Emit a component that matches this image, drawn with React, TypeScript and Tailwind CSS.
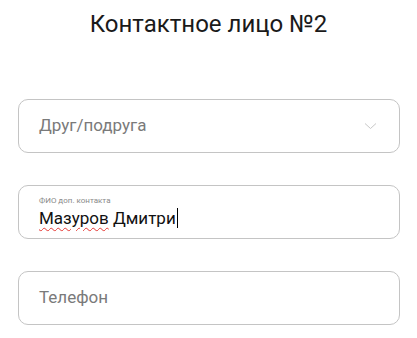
import React from "react";

export default function App() {
  return (
    <div className="w-[417px] h-[338px] bg-white overflow-hidden" style={{ fontFamily: "Roboto, 'Noto Sans', sans-serif" }}>
      <h1 className="text-[24px] leading-[28px] text-[#1a1a1a] text-center pt-[10px] font-normal">
        Контактное лицо №2
      </h1>
      <div className="flex flex-col gap-[32px] pl-[18px] pr-[17px] mt-[61px]">
        <div className="h-[54px] border border-[#c4c4c4] rounded-[10px] flex items-center pl-[20px] pr-[22px] justify-between">
          <span className="text-[17px] text-[#7a7a7a]">Друг/подруга</span>
          <svg width="13" height="8" viewBox="0 0 13 8" fill="none">
            <path d="M1 1.5 L6.5 6.5 L12 1.5" stroke="#c8c8c8" strokeWidth="1" />
          </svg>
        </div>
        <div className="h-[54px] border border-[#c4c4c4] rounded-[10px] flex flex-col justify-center pl-[20px]">
          <span className="text-[8px] leading-[10px] text-[#8a8a8a]">ФИО доп. контакта</span>
          <div className="flex items-center mt-[1px]">
            <span className="text-[17px] leading-[22px] text-[#111]">
              <span className="underline decoration-wavy decoration-[#e53935] decoration-[1px] underline-offset-[3px]">Мазуров</span>{" "}Дмитри
            </span>
            <span className="w-[1px] h-[20px] bg-black ml-[1px]" />
          </div>
        </div>
        <div className="h-[54px] border border-[#c4c4c4] rounded-[10px] flex items-center pl-[20px]">
          <span className="text-[17px] text-[#7a7a7a]">Телефон</span>
        </div>
      </div>
    </div>
  );
}
